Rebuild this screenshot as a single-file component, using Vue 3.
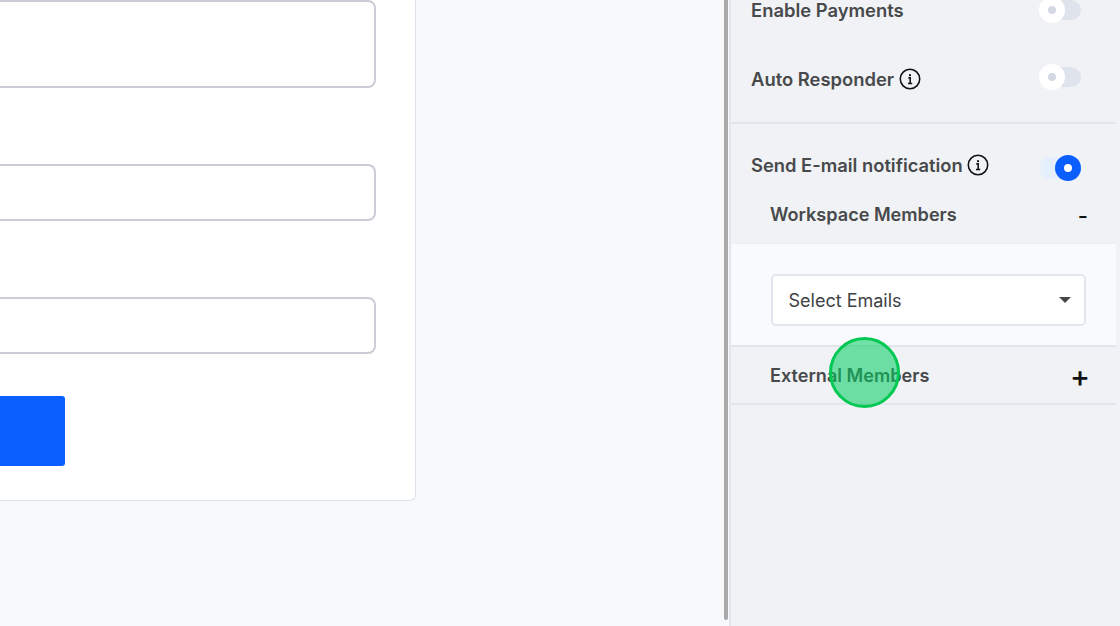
<script setup>
const infoStem = 'M10.2 10.8h2v6M9.8 16.9h4.6'
const infoDot = 'M12 6.8v2'
</script>

<template>
  <div class="page">
    <main class="main">
      <section class="card">
        <div class="field area"></div>
        <div class="field"></div>
        <div class="field"></div>
        <button class="submit" type="button" aria-label="Submit"></button>
      </section>
      <div class="scrollbar"></div>
    </main>

    <aside class="panel">
      <div class="row first">
        <span class="label">Enable Payments</span>
        <span class="toggle"><i class="knob"></i></span>
      </div>
      <div class="row second">
        <span class="label">Auto Responder
          <svg class="info" viewBox="0 0 24 24" width="22" height="22" fill="none" stroke="#111" stroke-width="1.7">
            <circle cx="12" cy="12" r="10.6" />
            <path :d="infoStem" />
            <path :d="infoDot" stroke-width="2.2" />
          </svg>
        </span>
        <span class="toggle"><i class="knob"></i></span>
      </div>
      <div class="row send">
        <span class="label">Send E-mail notification
          <svg class="info" viewBox="0 0 24 24" width="22" height="22" fill="none" stroke="#111" stroke-width="1.7">
            <circle cx="12" cy="12" r="10.6" />
            <path :d="infoStem" />
            <path :d="infoDot" stroke-width="2.2" />
          </svg>
        </span>
        <span class="toggle on"><i class="knob"></i></span>
      </div>
      <div class="acc-head workspace">
        <span class="label">Workspace Members</span>
        <span class="sign minus">-</span>
      </div>
      <div class="acc-body">
        <div class="select">
          <span>Select Emails</span>
          <i class="caret"></i>
        </div>
      </div>
      <div class="acc-head external">
        <span class="label">External Members</span>
        <span class="sign plus">+</span>
      </div>
    </aside>

    <div class="click-mark"></div>
  </div>
</template>

<style scoped>
.page {
  position: relative;
  display: flex;
  width: 1120px;
  height: 626px;
  overflow: hidden;
  background: #f8f9fb;
  font-family: Inter, "Liberation Sans", sans-serif;
}
.main {
  position: relative;
  flex: 0 0 729px;
}
.card {
  display: flex;
  flex-direction: column;
  align-items: flex-start;
  box-sizing: border-box;
  width: 416px;
  height: 540px;
  margin-top: -39px;
  padding: 0 39px 0 0;
  background: #fff;
  border-right: 1px solid #dde2ea;
  border-bottom: 1px solid #dde2ea;
  border-bottom-right-radius: 6px;
}
.field {
  box-sizing: border-box;
  width: 100%;
  height: 57px;
  margin-top: 76px;
  border: 2px solid #cbcdd6;
  border-left: 0;
  border-radius: 0 8px 8px 0;
}
.area {
  height: 88px;
  margin-top: 39px;
}
.submit {
  width: 65px;
  height: 70px;
  margin-top: 42px;
  padding: 0;
  border: 0;
  border-radius: 0 3px 3px 0;
  background: #0b5fff;
}
.scrollbar {
  position: absolute;
  top: 0;
  left: 724px;
  width: 4px;
  height: 620px;
  background: #a9a9a9;
  border-radius: 0 0 2px 2px;
}
.panel {
  flex: 1;
  display: flex;
  flex-direction: column;
  box-sizing: border-box;
  padding-right: 4px;
  background: #f0f2f5;
  border-left: 2px solid #e2e6ed;
}
.label {
  display: inline-flex;
  align-items: center;
  gap: 5px;
  font-size: 18.4px;
  font-weight: 600;
  line-height: 24px;
  color: #47494b;
}
.row {
  display: flex;
  align-items: center;
  justify-content: space-between;
  padding: 0 35px 0 20px;
}
.first {
  height: 69px;
  margin-top: -24px;
}
.first .label {
  margin-top: -2px;
}
.second {
  height: 79px;
  padding-bottom: 9px;
  box-sizing: border-box;
  border-bottom: 2px solid #e2e5ed;
}
.send {
  height: 84px;
  flex: none;
}
.send .label {
  margin-top: -2px;
  font-size: 18.35px;
  gap: 4px;
}
.send .toggle {
  margin-top: 4px;
}
.toggle {
  position: relative;
  display: block;
  width: 41px;
  height: 20px;
  border-radius: 10px;
  background: #dfe4ec;
}
.second .toggle {
  margin-top: -4px;
}
.first .toggle {
  margin-top: -2px;
}
.knob {
  position: absolute;
  top: -3px;
  left: -1px;
  box-sizing: border-box;
  width: 26px;
  height: 26px;
  border-radius: 50%;
  border: 9px solid #fff;
  background: #d3d8e2;
}
.toggle.on {
  background: #e6effd;
  height: 22px;
}
.toggle.on .knob {
  top: -2px;
  left: 15px;
  border-color: #0b5fff;
  background: #fff;
}
.acc-head {
  display: flex;
  justify-content: space-between;
  align-items: flex-start;
  box-sizing: border-box;
  flex: none;
  padding: 0 29px 0 39px;
}
.acc-head .label {
  font-size: 18.1px;
}
.workspace {
  height: 55px;
  margin-top: -20px;
  padding-top: 14px;
}
.sign {
  font-weight: 500;
  line-height: 24px;
  color: #111;
}
.minus {
  margin-top: 2px;
  margin-right: -1px;
  font-size: 22px;
}
.plus {
  margin-top: 1px;
  margin-right: -3px;
  font-size: 30px;
  font-weight: 500;
}
.acc-body {
  box-sizing: border-box;
  height: 104px;
  padding: 30px 30px 0 40px;
  background: #f9fafd;
  border-top: 1px solid #eceef4;
  border-bottom: 2px solid #e3e5ec;
}
.select {
  display: flex;
  align-items: center;
  justify-content: space-between;
  box-sizing: border-box;
  height: 52px;
  padding: 0 13px 0 15.5px;
  background: #fff;
  border: 2px solid #e0e5ee;
  border-radius: 5px;
  font-size: 18px;
  color: #404245;
}
.caret {
  margin-top: -1px;
  width: 0;
  height: 0;
  border-left: 6.5px solid transparent;
  border-right: 6.5px solid transparent;
  border-top: 6.5px solid #454749;
}
.external {
  height: 58px;
  padding-top: 16px;
  border-bottom: 2px solid #e2e5ec;
}
.click-mark {
  position: absolute;
  left: 829px;
  top: 337px;
  box-sizing: border-box;
  width: 71px;
  height: 71px;
  border-radius: 50%;
  border: 3.5px solid #00c853;
  background: rgba(0, 205, 95, 0.55);
}
</style>
